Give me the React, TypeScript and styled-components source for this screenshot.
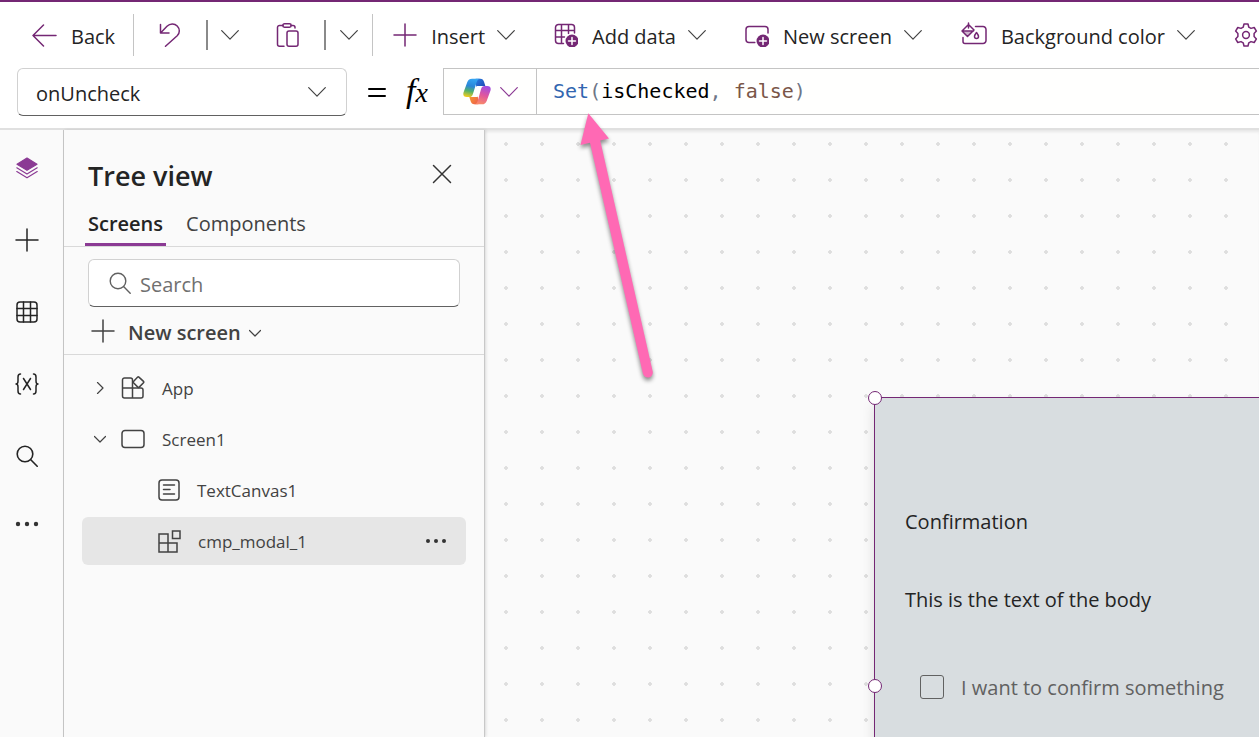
import React, { useState } from "react";
import styled, { createGlobalStyle } from "styled-components";

const purple = "#742774";

const GlobalStyle = createGlobalStyle`
  *, *::before, *::after { box-sizing: border-box; }
  html, body, #root { height: 100%; }
  body {
    margin: 0;
    overflow: hidden;
    background: #fafafa;
    color: #242424;
    font-family: "Open Sans", "Noto Sans", sans-serif;
    font-size: 20px;
    line-height: 28px;
  }
  button, input, select { font: inherit; color: inherit; margin: 0; }
  button { background: none; border: 0; padding: 0; cursor: pointer; }
`;

const Page = styled.div`
  display: flex;
  flex-direction: column;
  height: 100vh;
`;

const Header = styled.header`
  flex: none;
  border-top: 2px solid ${purple};
  border-bottom: 2px solid #e0e0e0;
  background: #fff;
`;

const CommandBar = styled.div`
  display: flex;
  align-items: center;
  height: 66px;
  padding-left: 12px;
  overflow: hidden;
`;

const CommandButton = styled.button<{ $end?: number }>`
  flex: none;
  display: flex;
  align-items: center;
  gap: 14px;
  height: 48px;
  padding: 0 ${(p) => p.$end ?? 19}px 0 20px;
  white-space: nowrap;
`;

const CommandLabel = styled.span`
  display: flex;
  align-items: center;
  gap: 12px;
`;

const Caption = styled.span`
  padding-top: 3px;
`;

const IconButton = styled.button<{ $width: number }>`
  flex: none;
  display: flex;
  align-items: center;
  justify-content: center;
  width: ${(p) => p.$width}px;
  height: 48px;
`;

const Divider = styled.span<{ $tall?: boolean }>`
  flex: none;
  width: ${(p) => (p.$tall ? 1 : 2)}px;
  height: ${(p) => (p.$tall ? 42 : 30)}px;
  background: ${(p) => (p.$tall ? "#c4c4c4" : "#8a8a8a")};
`;

const FormulaRow = styled.div`
  display: flex;
  height: 60px;
  padding-left: 17px;
`;

const PropertyPicker = styled.div`
  flex: none;
  display: grid;
  width: 330px;
  height: 48px;
  > * { grid-area: 1 / 1; }
  > svg { place-self: center end; margin-right: 21px; pointer-events: none; }
`;

const PropertySelect = styled.select`
  appearance: none;
  width: 100%;
  padding: 4px 48px 0 18px;
  border: 1px solid #d1d1d1;
  border-bottom-color: #616161;
  border-radius: 6px;
  background: #fff;
`;

const FormulaMark = styled.div`
  flex: none;
  display: flex;
  align-items: center;
  justify-content: space-between;
  width: 96px;
  height: 48px;
  padding: 0 15px 0 21px;
`;

const FxGlyph = styled.span`
  display: flex;
  align-items: baseline;
  height: 42px;
  color: #000;
  font: italic 34px/40px "Liberation Serif", serif;
  small { font-size: 28px; }
`;

const FormulaBox = styled.div`
  flex: 1;
  display: flex;
  min-width: 0;
  height: 47px;
  border: solid #c4c4c4;
  border-width: 1px 0 1px 1px;
  background: #fffffe;
`;

const CopilotButton = styled.button`
  flex: none;
  display: flex;
  align-items: center;
  justify-content: center;
  gap: 9px;
  width: 93px;
  border-right: 1px solid #c4c4c4;
`;

const Editor = styled.div`
  flex: 1;
  display: grid;
  min-width: 0;
  overflow: hidden;
  font: 20px/28px "DejaVu Sans Mono", monospace;
  > * { grid-area: 1 / 1; padding: 8px 16px; }
`;

const Code = styled.code`
  font: inherit;
  white-space: pre;
  color: #000;
`;

const Token = styled.span<{ $kind: "function" | "punctuation" | "constant" }>`
  color: ${(p) => ({ function: "#3266b0", punctuation: "#6e7687", constant: "#7a5648" })[p.$kind]};
`;

const EditorInput = styled.input`
  width: 100%;
  border: 0;
  outline: 0;
  background: transparent;
  color: transparent;
  caret-color: #000;
`;

const Body = styled.div`
  flex: 1;
  display: flex;
  min-height: 0;
`;

const Rail = styled.nav`
  flex: none;
  display: flex;
  flex-direction: column;
  width: 64px;
  padding: 2px 9px 0 0;
  border-right: 1px solid #c8c8c8;
`;

const RailButton = styled.button<{ $short?: boolean }>`
  display: flex;
  align-items: center;
  justify-content: center;
  height: ${(p) => (p.$short ? 64 : 72)}px;
`;

const Panel = styled.aside`
  z-index: 1;
  flex: none;
  display: flex;
  flex-direction: column;
  width: 421px;
  border-right: 1px solid #c8c8c8;
  background: #fafafa;
  box-shadow: 1px 0 3px rgba(0, 0, 0, 0.12);
`;

const PanelHeader = styled.div`
  display: flex;
  align-items: center;
  justify-content: space-between;
  height: 72px;
  padding: 20px 30px 0 24px;
`;

const PanelTitle = styled.h2`
  margin: 0;
  font-size: 27px;
  font-weight: 600;
  line-height: 36px;
`;

const PanelIconButton = styled.button`
  display: flex;
  align-items: center;
  justify-content: center;
`;

const Tabs = styled.div`
  display: flex;
  gap: 17px;
  height: 45px;
  padding-left: 21px;
  border-bottom: 1px solid #d9d9d9;
`;

const Tab = styled.button<{ $active?: boolean }>`
  padding: 2px 3px 0;
  border-bottom: 3px solid ${(p) => (p.$active ? "#8b3a94" : "transparent")};
  color: ${(p) => (p.$active ? "#242424" : "#424242")};
  font-weight: ${(p) => (p.$active ? 600 : 400)};
`;

const SearchBox = styled.label`
  display: flex;
  align-items: center;
  gap: 9px;
  height: 48px;
  margin: 12px 24px 0;
  padding: 0 20px;
  border: 1px solid #d1d1d1;
  border-bottom-color: #616161;
  border-radius: 6px;
  background: #fff;
`;

const SearchInput = styled.input`
  flex: 1;
  min-width: 0;
  padding: 3px 0 0;
  border: 0;
  outline: 0;
  background: transparent;
  &::placeholder { color: #707070; opacity: 1; }
`;

const NewScreenRow = styled.div`
  height: 48px;
  padding-left: 27px;
  border-bottom: 1px solid #d9d9d9;
`;

const NewScreenButton = styled.button`
  display: flex;
  align-items: center;
  gap: 13px;
  height: 48px;
  color: #424242;
  font-weight: 600;
  > span { display: flex; align-items: center; gap: 8px; padding-top: 3px; }
`;

const Tree = styled.ul`
  display: flex;
  flex-direction: column;
  gap: 3px;
  margin: 0;
  padding: 9px 18px 0;
  list-style: none;
`;

const TreeRow = styled.li<{ $selected?: boolean; $child?: boolean }>`
  display: flex;
  align-items: center;
  height: 48px;
  padding: 0 18px 0 ${(p) => (p.$child ? 76 : 6)}px;
  border-radius: 6px;
  background: ${(p) => (p.$selected ? "#e6e6e6" : "transparent")};
  color: #424242;
  font-size: 17px;
`;

const Expander = styled.button`
  display: flex;
  align-items: center;
  justify-content: center;
  width: 24px;
  height: 24px;
  margin-right: 9px;
`;

const TreeItem = styled.button`
  flex: 1;
  display: flex;
  align-items: center;
  gap: 17px;
  text-align: left;
`;

const TreeLabel = styled.span`
  padding-top: 2px;
`;

const Canvas = styled.main`
  position: relative;
  flex: 1;
  min-width: 0;
  overflow: hidden;
  background: #fafafa radial-gradient(circle, #dedede 0 1px, #e2e2e2 2px, transparent 2px) 3px -4px / 36px 36px;
  box-shadow: inset 0 3px 3px -1px rgba(0, 0, 0, 0.08);
`;

const Modal = styled.section`
  position: absolute;
  left: 389px;
  top: 267px;
  width: 1024px;
  height: 578px;
  padding: 110px 30px;
  border: 1px solid ${purple};
  background: #d8dde0;
  box-shadow: 0 8px 12px rgba(0, 0, 0, 0.12);
`;

const Handle = styled.span<{ $middle?: boolean }>`
  position: absolute;
  left: -7px;
  top: ${(p) => (p.$middle ? "50%" : "0")};
  width: 14px;
  height: 14px;
  margin-top: -7px;
  border: 1px solid ${purple};
  border-radius: 50%;
  background: #fff;
`;

const ModalText = styled.p`
  margin: 0 0 50px;
`;

const Confirm = styled.label`
  display: flex;
  align-items: center;
  gap: 17px;
  margin-top: 60px;
  padding-left: 15px;
  color: #616161;
`;

const CheckBox = styled.input`
  appearance: none;
  width: 24px;
  height: 24px;
  margin-bottom: 3px;
  border: 1px solid #616161;
  border-radius: 3px;
  &:checked { background: ${purple}; }
`;

const Pointer = styled.svg`
  position: absolute;
  z-index: 2;
  left: 570px;
  top: 105px;
  pointer-events: none;
  filter: drop-shadow(0 3px 2px rgba(0, 0, 0, 0.45));
`;

type IconProps = { size?: number; color?: string; stroke?: number; children: React.ReactNode };

const Icon = ({ size = 24, color = "#242424", stroke = 1.5, children }: IconProps) => (
  <svg
    width={size}
    height={size}
    viewBox={`0 0 ${size} ${size}`}
    fill="none"
    stroke={color}
    strokeWidth={stroke}
    strokeLinecap="round"
    strokeLinejoin="round"
    aria-hidden="true"
  >
    {children}
  </svg>
);

const Chevron = ({ color = "#424242" }: { color?: string }) => (
  <Icon size={18} color={color} stroke={1.2}>
    <path d="M.7 4.7 9 13.2l8.3-8.5" />
  </Icon>
);

const SmallChevron = ({ right = false }: { right?: boolean }) => (
  <Icon size={12} color="#424242" stroke={1.2}>
    <path d={right ? "M3.500.5 9 6l-5.500 5.500" : "M.5 3.500 6 9l5.500-5.500"} />
  </Icon>
);

const PlusBadge = () => (
  <g>
    <circle cx="18" cy="18" r="7.600" fill="#fff" stroke="none" />
    <circle cx="18" cy="18" r="6.500" fill={purple} stroke="none" />
    <path d="M18 14.500v7M14.500 18h7" stroke="#fff" />
  </g>
);

const Plus = ({ color }: { color?: string }) => (
  <Icon color={color} stroke={1.5}>
    <path d="M12 1v22M1 12h22" />
  </Icon>
);

const Dots = ({ size, gap, r }: { size: number; gap: number; r: number }) => (
  <svg width={size} height="8" viewBox={`0 0 ${size} 8`} fill="#333" aria-hidden="true">
    {[-1, 0, 1].map((n) => (
      <circle key={n} cx={size / 2 + n * gap} cy="4" r={r} />
    ))}
  </svg>
);

const Magnifier = ({ color, stroke }: { color: string; stroke: number }) => (
  <Icon size={22} color={color} stroke={stroke}>
    <circle cx="9" cy="9" r="7.800" />
    <path d="m14.800 14.800 6.400 6.400" />
  </Icon>
);

const CopilotLogo = () => (
  <svg width="28" height="27" viewBox="0 0 84 81" aria-hidden="true">
    <defs>
      <linearGradient id="cpLeft" x1="0.5" y1="0" x2=".3" y2="1">
        <stop offset="0" stopColor="#35a5f2" />
        <stop offset=".4" stopColor="#2b86d8" />
        <stop offset=".68" stopColor="#52b16b" />
        <stop offset="1" stopColor="#f2cc1c" />
      </linearGradient>
      <linearGradient id="cpRight" x1="0.7" y1="0" x2=".4" y2="1">
        <stop offset="0" stopColor="#a04ce4" />
        <stop offset=".5" stopColor="#e0569e" />
        <stop offset="1" stopColor="#f98a68" />
      </linearGradient>
      <linearGradient id="cpTop" x1="0" y1="0" x2="1" y2="1">
        <stop offset="0" stopColor="#2a7fe0" />
        <stop offset="1" stopColor="#1d3fae" />
      </linearGradient>
      <linearGradient id="cpBottom" x1="0" y1="0" x2="1" y2="1">
        <stop offset="0" stopColor="#f6a52a" />
        <stop offset="1" stopColor="#ee5a4e" />
      </linearGradient>
    </defs>
    <path d="M38 2h14c6 0 9 3 11 9l4 13H52c-7 0-9 3-12 10z" fill="url(#cpTop)" />
    <path d="M46 79H34c-6 0-9-3-11-9l-4-13h12c8 0 11-4 13-11z" fill="url(#cpBottom)" />
    <path d="M27 2h25c-6 0-9 4-11 10L30 47c-2 7-5 10-11 10H11C2 57-1 51 2 42l11-30C16 5 20 2 27 2z" fill="url(#cpLeft)" />
    <path d="M57 79H33c6 0 9-4 11-10l10-35c2-7 5-10 11-10h8c9 0 12 6 9 15L71 69c-3 7-7 10-14 10z" fill="url(#cpRight)" />
    <path d="M42 24h16c-4 1-5 4-7 9l-7 24H26c3-1 5-4 7-9l5-17c1-4 2-6 4-7z" fill="#fff" />
  </svg>
);

const commands = [
  { label: "Insert", icon: <Plus color={purple} /> },
  {
    label: "Add data",
    icon: (
      <Icon color={purple}>
        <path d="M9.500 20.500h-5a3 3 0 0 1-3-3v-13a3 3 0 0 1 3-3h13a3 3 0 0 1 3 3v5.500M1.500 7.500h19M1.500 14h9M7.500 1.500v19M14.500 1.500v9" />
        <PlusBadge />
      </Icon>
    ),
  },
  {
    label: "New screen",
    icon: (
      <Icon color={purple}>
        <path d="M10 19.500H4a3 3 0 0 1-3-3v-10a3 3 0 0 1 3-3h16a3 3 0 0 1 3 3V10" />
        <PlusBadge />
      </Icon>
    ),
  },
  {
    label: "Background color",
    icon: (
      <Icon size={26} color={purple}>
        <path d="M14.500 4.500H22a3 3 0 0 1 3 3v11a3 3 0 0 1-3 3H4a2 2 0 0 1-2-2v-4M7.500 1v5M7 3 1 9l5.500 5.500L13 8 8 3M1 9h11.500M15.500 10.500c-1.300 1.700-2 2.900-2 4a2 2 0 0 0 4 0c0-1.100-.7-2.300-2-4z" />
        <path d="M1.500 9.300h10.300L6.500 14z" fill={purple} fillOpacity=".35" stroke="none" />
      </Icon>
    ),
  },
];

const rail = [
  {
    label: "Tree view",
    icon: (
      <Icon size={22} color="#8b3a94" stroke={1.2}>
        <path d="M11 1 21 7.300 11 13.300 1 7.300z" fill="#8b3a94" />
        <path d="m.8 10.800 10.200 6.200 10.200-6.200M.8 14.600 11 20.800l10.200-6.200" />
      </Icon>
    ),
  },
  { label: "Insert", icon: <Plus /> },
  {
    label: "Data",
    icon: (
      <Icon size={22}>
        <rect x="1" y="1" width="20" height="20" rx="3" />
        <path d="M7.500 1v20M14.500 1v20M1 7.500h20M1 14.500h20" />
      </Icon>
    ),
  },
  {
    label: "Variables",
    icon: (
      <Icon>
        <path d="M5.500 2C3.500 2 3 3 3 5v4c0 2-.6 3-2 3 1.400 0 2 1 2 3v4c0 2 .5 3 2.500 3M18.500 2c2 0 2.500 1 2.500 3v4c0 2 .6 3 2 3-1.400 0-2 1-2 3v4c0 2-.5 3-2.500 3M8.500 6.500l7 11M15.500 6.500l-7 11" />
      </Icon>
    ),
  },
  { label: "Search", icon: <Magnifier color="#242424" stroke={1.6} /> },
  { label: "More", icon: <Dots size={24} gap={9} r={2.2} /> },
];

const AppIcon = (
  <Icon color="#424242">
    <path d="M11.500 12H1.500V4a2 2 0 0 1 2-2h6a2 2 0 0 1 2 2v18H3.500a2 2 0 0 1-2-2v-8M11.500 12H20a2 2 0 0 1 2 2v6a2 2 0 0 1-2 2h-8.500" />
    <path d="m17.900 1.100 4.600 4.300a1 1 0 0 1 0 1.400l-4.300 4.300a1 1 0 0 1-1.400 0l-4.300-4.300a1 1 0 0 1 0-1.400l4.200-4.300a.9.9 0 0 1 1.200 0z" fill="#fafafa" />
  </Icon>
);
const ScreenIcon = (
  <Icon color="#424242">
    <rect x="1" y="3.500" width="22" height="17" rx="3" />
  </Icon>
);
const TextIcon = (
  <Icon size={22} color="#424242">
    <rect x="1" y="1" width="20" height="20" rx="3" />
    <path d="M5.500 6h11M5.500 10.500H12M5.500 15h11" />
  </Icon>
);
const ComponentIcon = (
  <Icon size={23} color="#424242">
    <path d="M1 4h9v18H1zM1 13h18v9h-9M14.500 1H22v7.500h-7.500z" strokeLinejoin="miter" />
  </Icon>
);

const formula = "Set(isChecked, false)";

export default function App() {
  const [search, setSearch] = useState("");
  return (
    <Page>
      <GlobalStyle />
      <Header>
        <CommandBar>
          <CommandButton $end={18}>
            <Icon size={25} color={purple}>
              <path d="M24 12.500H1M11.500 2 1 12.500 11.500 23" />
            </Icon>
            <Caption>Back</Caption>
          </CommandButton>
          <Divider $tall />
          <IconButton $width={72} aria-label="Undo">
            <Icon color={purple}>
              <path d="M2.500 1.500V10H11M3 9.500l6-6.200c3-3 7.500-3 10.200-.3 2.800 2.800 2.800 7 0 9.800L7.500 23.300" />
            </Icon>
          </IconButton>
          <Divider />
          <IconButton $width={44} aria-label="Undo options">
            <Chevron />
          </IconButton>
          <IconButton $width={72} aria-label="Paste">
            <Icon color={purple}>
              <path d="M7 2.500H3.500a2 2 0 0 0-2 2v16.700a2 2 0 0 0 2 2H8M15 2.500h2a2 2 0 0 1 2 2V5" />
              <rect x="6.800" y=".8" width="8.400" height="3.400" rx="1.700" />
              <rect x="11" y="8" width="11" height="15.200" rx="2" />
            </Icon>
          </IconButton>
          <Divider />
          <IconButton $width={46} aria-label="Paste options">
            <Chevron />
          </IconButton>
          <Divider $tall />
          {commands.map((c) => (
            <CommandButton key={c.label}>
              {c.icon}
              <CommandLabel>
                <Caption>{c.label}</Caption>
                <Chevron />
              </CommandLabel>
            </CommandButton>
          ))}
          <CommandButton aria-label="Settings">
            <Icon color={purple}>
              <circle cx="12" cy="12" r="3.400" />
              <path d="M10 1h4l.8 3.200 2.200 1.200 3.200-.9 2.200 3.600-2.300 2.400v3l2.300 2.400-2.200 3.600-3.200-.9-2.200 1.200L14 23h-4l-.8-3.200L7 18.600l-3.200.9-2.200-3.600 2.300-2.400v-3L1.600 8.100l2.200-3.600 3.200.9 2.200-1.200z" />
            </Icon>
          </CommandButton>
        </CommandBar>
        <FormulaRow>
          <PropertyPicker>
            <PropertySelect aria-label="Property" defaultValue="onUncheck">
              <option>onUncheck</option>
            </PropertySelect>
            <Chevron />
          </PropertyPicker>
          <FormulaMark>
            <Icon size={18} color="#000" stroke={2}>
              <path d="M1 6h16M1 13h16" />
            </Icon>
            <FxGlyph>
              f<small>x</small>
            </FxGlyph>
          </FormulaMark>
          <FormulaBox>
            <CopilotButton aria-label="Copilot">
              <CopilotLogo />
              <Chevron color="#8b3a94" />
            </CopilotButton>
            <Editor>
              <Code aria-hidden="true">
                <Token $kind="function">Set</Token>
                <Token $kind="punctuation">(</Token>
                isChecked
                <Token $kind="punctuation">, </Token>
                <Token $kind="constant">false</Token>
                <Token $kind="punctuation">)</Token>
              </Code>
              <EditorInput aria-label="Formula" value={formula} readOnly />
            </Editor>
          </FormulaBox>
        </FormulaRow>
      </Header>
      <Body>
        <Rail aria-label="Studio">
          {rail.map((r, i) => (
            <RailButton key={r.label} aria-label={r.label} $short={i === rail.length - 1}>
              {r.icon}
            </RailButton>
          ))}
        </Rail>
        <Panel>
          <PanelHeader>
            <PanelTitle>Tree view</PanelTitle>
            <PanelIconButton aria-label="Close">
              <Icon size={24} color="#333">
                <path d="m3.500 1.500 17 17M20.500 1.500l-17 17" />
              </Icon>
            </PanelIconButton>
          </PanelHeader>
          <Tabs role="tablist">
            <Tab role="tab" aria-selected $active>
              Screens
            </Tab>
            <Tab role="tab">Components</Tab>
          </Tabs>
          <SearchBox>
            <Magnifier color="#616161" stroke={1.4} />
            <SearchInput
              type="text"
              aria-label="Search"
              placeholder="Search"
              value={search}
              onChange={(e) => setSearch(e.target.value)}
            />
          </SearchBox>
          <NewScreenRow>
            <NewScreenButton>
              <Plus color="#424242" />
              <span>
                New screen
                <SmallChevron />
              </span>
            </NewScreenButton>
          </NewScreenRow>
          <Tree>
            <TreeRow>
              <Expander aria-label="Expand App">
                <SmallChevron right />
              </Expander>
              <TreeItem>
                {AppIcon}
                <TreeLabel>App</TreeLabel>
              </TreeItem>
            </TreeRow>
            <TreeRow>
              <Expander aria-label="Collapse Screen1">
                <SmallChevron />
              </Expander>
              <TreeItem>
                {ScreenIcon}
                <TreeLabel>Screen1</TreeLabel>
              </TreeItem>
            </TreeRow>
            <TreeRow $child>
              <TreeItem>
                {TextIcon}
                <TreeLabel>TextCanvas1</TreeLabel>
              </TreeItem>
            </TreeRow>
            <TreeRow $child $selected>
              <TreeItem>
                {ComponentIcon}
                <TreeLabel>cmp_modal_1</TreeLabel>
              </TreeItem>
              <PanelIconButton aria-label="More actions">
                <Dots size={24} gap={8} r={2} />
              </PanelIconButton>
            </TreeRow>
          </Tree>
        </Panel>
        <Canvas>
          <Modal>
            <Handle />
            <Handle $middle />
            <ModalText>Confirmation</ModalText>
            <ModalText>This is the text of the body</ModalText>
            <Confirm>
              <CheckBox type="checkbox" />
              I want to confirm something
            </Confirm>
          </Modal>
        </Canvas>
      </Body>
      <Pointer width="100" height="290" viewBox="570 105 100 290" aria-hidden="true">
        <path d="M588.300 113.300 609 138.500l-8.800 1.900 52.500 231a5 5 0 0 1-9.800 2.200L590 142.700l-9.500 2.300z" fill="#ff69b4" />
      </Pointer>
    </Page>
  );
}
